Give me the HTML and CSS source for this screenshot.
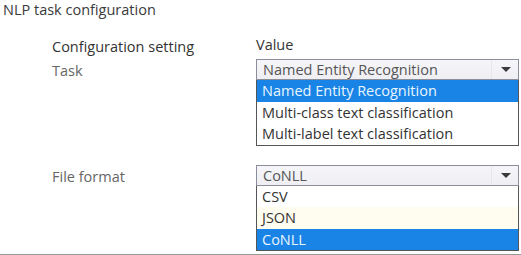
FILE: index.html
```
<!DOCTYPE html>
<html lang="en">
<head>
	<meta charset="UTF-8">
	<title>NLP task configuration</title>
	<link rel="stylesheet" href="styles.css">
</head>
<body>
	<div class="page">
		<div class="title">NLP task configuration</div>
		<div class="config">
			<div class="row head">
				<div class="label">Configuration setting</div>
				<div class="value">Value</div>
			</div>
			<div class="row">
				<div class="label">Task</div>
				<div class="value">
					<div class="select">
						<span class="select-text">Named Entity Recognition</span>
						<span class="select-arrow"></span>
					</div>
					<ul class="options">
						<li class="option-selected">Named Entity Recognition</li>
						<li class="option">Multi-class text classification</li>
						<li class="option">Multi-label text classification</li>
					</ul>
				</div>
			</div>
			<div class="row file">
				<div class="label">File format</div>
				<div class="value">
					<div class="select">
						<span class="select-text">CoNLL</span>
						<span class="select-arrow"></span>
					</div>
					<ul class="options">
						<li class="option">CSV</li>
						<li class="option option-tint">JSON</li>
						<li class="option-selected">CoNLL</li>
					</ul>
				</div>
			</div>
		</div>
	</div>
</body>
</html>
```
FILE: styles.css
```
body{
	margin: 0;
	background: #fff;
	font-family: "Open Sans", "Noto Sans", sans-serif;
	font-size: 14.5px;
	color: #444;
}
.page{
	height: 254px;
	border-bottom: 1px solid #9a9a9a;
	overflow: hidden;
}
.title{
	padding: 0 0 0 3px;
	line-height: 20px;
	color: #3a3a3a;
}
.config{
	padding: 15px 0 0 52px;
}
.row{
	display: flex;
}
.label{
	width: 204px;
	color: #666;
}
.head .label,.head .value{
	color: #333;
	line-height: 20px;
	padding-top: 0;
}
.head{
	margin-bottom: 2px;
}
.row .label{
	padding-top: 2px;
	line-height: 20px;
}
.file{
	margin-top: 19px;
}
.value{
	width: 263px;
}
.select{
	display: flex;
	height: 19px;
	border: 1px solid #8a8e9a;
	background: linear-gradient(#f6f6fa, #eeeef3);
}
.select-text{
	flex: 1;
	padding-left: 6px;
	line-height: 19px;
	color: #555;
}
.select-arrow{
	width: 26px;
	border-left: 1px solid #e6e6ec;
	position: relative;
}
.select-arrow::after{
	content: "";
	position: absolute;
	left: 9px;
	top: 7px;
	border-left: 5px solid transparent;
	border-right: 5px solid transparent;
	border-top: 5px solid #3a3a3a;
}
.options{
	list-style: none;
	margin: 0;
	padding: 0;
	border: 1px solid #555;
	border-top: 0;
	width: 261px;
}
.option,.option-selected{
	height: 21.5px;
	line-height: 21px;
	padding-left: 5px;
	color: #333;
}
.option-selected{
	background: #1a84e6;
	color: #e8f6ff;
}
.option-tint{
	background: #fffdf0;
}
```
